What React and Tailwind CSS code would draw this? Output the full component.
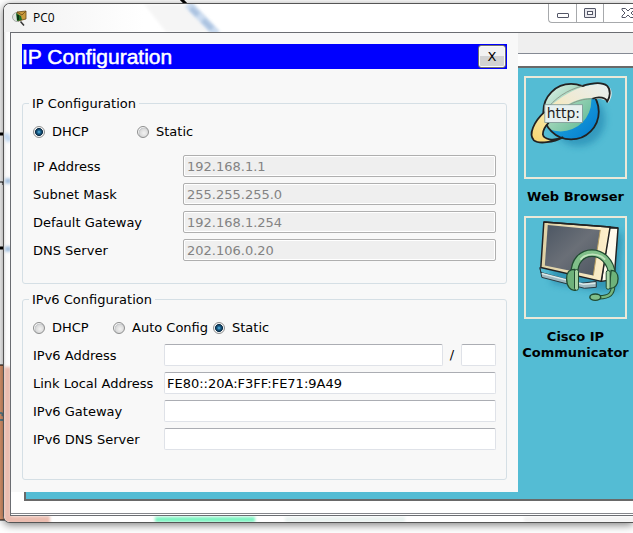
const ipRows = [
  { id: 'ip-address', label: 'IP Address', value: '192.168.1.1' },
  { id: 'subnet-mask', label: 'Subnet Mask', value: '255.255.255.0' },
  { id: 'default-gateway', label: 'Default Gateway', value: '192.168.1.254' },
  { id: 'dns-server', label: 'DNS Server', value: '202.106.0.20' },
];

const ipv6Rows = [
  { id: 'link-local', label: 'Link Local Address', value: 'FE80::20A:F3FF:FE71:9A49' },
  { id: 'ipv6-gateway', label: 'IPv6 Gateway', value: '' },
  { id: 'ipv6-dns', label: 'IPv6 DNS Server', value: '' },
];

const inputClass =
  'h-[22px] min-w-0 rounded-[2px] border border-[#dfe2e8] border-t-[#abadb3] bg-white px-[2px] text-[13px] text-black outline-none';
const disabledClass =
  'h-[22px] min-w-0 flex-1 rounded-[2px] border border-[#afafaf] bg-[#efefef] px-[3px] text-[13px] text-[#838383] shadow-[inset_0_0_0_1px_#fff] outline-none';

function Radio({ name, label, checked, className }) {
  return (
    <label className={`flex items-center gap-[7px] whitespace-nowrap ${className || ''}`}>
      <input
        type="radio"
        name={name}
        defaultChecked={checked}
        className="size-3 shrink-0 appearance-none rounded-full border border-[#8e8f8f] bg-[radial-gradient(circle_at_60%_60%,#f2f2f2_0%,#dcdcdc_45%,#c4c7ca_60%,#f4f4f4_66%)] checked:bg-[radial-gradient(circle_at_50%_50%,#5fc0ea_0%,#1a5f8c_25%,#0b2b44_52%,#f4f4f4_60%)]"
      />
      {label}
    </label>
  );
}

function Group({ title, children, className }) {
  return (
    <fieldset className={`min-w-0 rounded-[3px] border border-[#d5dfe5] px-[10px] ${className}`}>
      <legend className="-ml-1 px-[3px] leading-[19px]">{title}</legend>
      {children}
    </fieldset>
  );
}

// Network drawing that lies behind the window
function Backdrop() {
  return (
    <svg className="absolute inset-0 size-full" aria-hidden="true">
      <rect x="-2" y="365" width="20" height="155" fill="#e39a70" stroke="#000" />
      <path d="M178-4 L188 6" stroke="#000" strokeWidth="3" />
      <path d="M0 134h3M0 248h3" stroke="#000" strokeWidth="3" />
      <path d="M0 182h3v3" stroke="#000" fill="none" />
      <path d="M0 413q4 0 2 3M0 420h3" stroke="#5b8290" strokeWidth="2" fill="none" />
    </svg>
  );
}

// Colours that show through the glass frame
function GlassTint() {
  return (
    <svg className="absolute inset-0 size-full" aria-hidden="true">
      <defs>
        <filter id="glass" x="-50%" y="-50%" width="200%" height="200%">
          <feGaussianBlur stdDeviation="1.5" />
        </filter>
        <linearGradient id="side" x1="0" x2="1">
          <stop offset="0" stopColor="#e2e2e2" />
          <stop offset="0.3" stopColor="#fafafa" />
          <stop offset="1" stopColor="#fff" />
        </linearGradient>
        <linearGradient id="bar" x1="0" x2="1">
          <stop offset="0" stopColor="#f1f1f1" />
          <stop offset="1" stopColor="#fff" />
        </linearGradient>
      </defs>
      <rect width="7" height="520" fill="url(#side)" />
      <rect width="140" height="28" fill="url(#bar)" />
      <path d="M162 28L140 0h50l25 28z" fill="#f5f5f5" filter="url(#glass)" />
      <path d="M184 0L213 30" stroke="#cbdcf0" strokeWidth="8" filter="url(#glass)" />
      <path d="M187 4l7 7M199 16l9 9" stroke="#abc2e0" strokeWidth="5" filter="url(#glass)" />
      <path d="M1 130l5 7" stroke="#c3d9f1" strokeWidth="6" filter="url(#glass)" />
      <path d="M1 177h6M1 245h6" stroke="#9dbbdc" strokeWidth="5" filter="url(#glass)" />
      <path d="M0 363h7v149h39v8H0z" fill="#ebbcaf" filter="url(#glass)" />
      <path d="M151 513h100v5H151z" fill="#74f3bd" filter="url(#glass)" />
      <path d="M281 513h120v5H281z" fill="#e9f2f0" filter="url(#glass)" />
      <path d="M520 513h120v5H520z" fill="#f2f2f2" filter="url(#glass)" />
    </svg>
  );
}

function AppIcon() {
  return (
    <svg width="16" height="16" viewBox="0 0 16 16" aria-hidden="true">
      <ellipse cx="5" cy="7" rx="4.5" ry="4.5" fill="#dfe3df" stroke="#a5aaa5" />
      <path d="M5 2l9-1v8l-8 2z" fill="#c99a3c" stroke="#6b4a16" strokeWidth="0.8" />
      <path d="M5 2l5 3 4-4" fill="none" stroke="#6b4a16" strokeWidth="0.8" />
      <path d="M4 3l5 3 1 4-5 1z" fill="#1c6b28" />
      <path d="M6 5v5" stroke="#0c3512" strokeWidth="2" />
      <path d="M8.500 11.500L12 15.500" stroke="#333" strokeWidth="1.500" />
    </svg>
  );
}

function TitleButtons() {
  const button = 'flex h-[18px] shrink-0 items-center justify-center border-[#a7a9ac]';
  return (
    <div className="flex w-[85px] overflow-hidden rounded-bl-[4px] border-b border-l border-[#a7a9ac] bg-white">
      <button type="button" aria-label="Minimize" className={`${button} w-7 border-r`}>
        <svg width="12" height="12" viewBox="0 0 12 12">
          <rect x="0.500" y="6.500" width="11" height="4" rx="0.500" fill="#fff" stroke="#535666" />
        </svg>
      </button>
      <button type="button" aria-label="Maximize" className={`${button} w-[27px] border-r`}>
        <svg width="12" height="10" viewBox="0 0 12 10">
          <rect x="0.500" y="0.500" width="11" height="9" rx="0.500" fill="#e9e9ee" stroke="#535666" />
          <rect x="3.500" y="3.500" width="5" height="3" fill="#fff" stroke="#535666" />
        </svg>
      </button>
      <button type="button" aria-label="Close" className={`${button} w-12`}>
        <svg width="14" height="12" viewBox="0 0 14 12">
          <path d="M1 1.500h3.500L7 4l2.500-2.500H13V3L10 6l3 3v1.500H9.500L7 8l-2.500 2.500H1V9l3-3-3-3z" fill="#fff" stroke="#535666" strokeLinejoin="round" />
        </svg>
      </button>
    </div>
  );
}

function BrowserIcon() {
  return (
    <svg viewBox="0 0 100 100" className="size-full" aria-hidden="true">
      <defs>
        <linearGradient id="sea" x1="0" y1="0" x2="1" y2="1">
          <stop offset="0.3" stopColor="#23a9dc" />
          <stop offset="1" stopColor="#0079cf" />
        </linearGradient>
        <linearGradient id="land" x1="0" y1="0" x2="1" y2="1">
          <stop offset="0.2" stopColor="#eaf5f2" />
          <stop offset="0.6" stopColor="#9bd3b6" />
          <stop offset="1" stopColor="#58b791" />
        </linearGradient>
        <linearGradient id="swoosh" x1="0" y1="1" x2="1" y2="0">
          <stop offset="0" stopColor="#f6d56d" />
          <stop offset="0.35" stopColor="#fae9a9" />
          <stop offset="0.6" stopColor="#f0ead2" />
          <stop offset="1" stopColor="#e7eff1" />
        </linearGradient>
        <clipPath id="globe"><circle cx="45.500" cy="34" r="28" /></clipPath>
        <filter id="soft" x="-30%" y="-30%" width="160%" height="160%">
          <feGaussianBlur stdDeviation="4" />
        </filter>
      </defs>
      <circle cx="53" cy="42" r="27" fill="#1c82ad" opacity="0.6" filter="url(#soft)" />
      <circle cx="45.500" cy="34" r="28" fill="url(#sea)" />
      <circle cx="35" cy="23" r="31" fill="url(#land)" clipPath="url(#globe)" />
      <circle cx="45.500" cy="34" r="28" fill="none" stroke="#222" strokeWidth="1.800" />
      <path d="M19 34C8 44 2 57 8 63c5 4 20 2 29-3-10 4-19 2-20-3-1-6 8-17 20-27 14-9 25-11 34-9 7 0 11 2 12 4 4-5 5-12 1-16-6-5-17-3-27 0-13 4-28 14-38 25z" fill="url(#swoosh)" />
      <path d="M57 8c10-3 20-4 25 0 4 4 3 11 0 16-1-4-8-6-15-3M19 34C8 44 2 57 8 63c5 4 20 2 29-3-10 4-19 2-20-3 0-4 2-8 6-12" fill="none" stroke="#222" strokeWidth="1.800" strokeLinejoin="round" />
      <path d="M19 34C29 20 42 12 57 8M26 41c15-15 28-20 41-20" fill="none" stroke="#858b80" strokeWidth="0.800" />
      <rect x="19" y="27" width="38" height="18" fill="#e6f0ef" stroke="#7b9492" strokeWidth="0.800" />
      <text x="21" y="40" fontSize="14" fill="#222" className="font-['DejaVu_Sans',sans-serif] font-normal">http:</text>
    </svg>
  );
}

function CommunicatorIcon() {
  return (
    <svg viewBox="0 0 100 100" className="size-full" aria-hidden="true">
      <defs>
        <linearGradient id="screen" x1="0" y1="0" x2="1" y2="1">
          <stop offset="0" stopColor="#4c5663" />
          <stop offset="0.5" stopColor="#6a6f77" />
          <stop offset="1" stopColor="#4d5661" />
        </linearGradient>
        <linearGradient id="bezel" x1="0" x2="1">
          <stop offset="0" stopColor="#ddd0a4" />
          <stop offset="1" stopColor="#fff0cc" />
        </linearGradient>
      </defs>
      <path d="M22 12L97 16 93 74 76 74 26 66z" fill="#1f7da0" opacity="0.6" filter="url(#soft)" />
      <path d="M14 50l1 5 40 11 16-2v6l-12 1-43-11z" fill="#9fb9c0" stroke="#26383f" strokeLinejoin="round" />
      <path d="M16 56l42 11 12-1" stroke="#dceaea" strokeWidth="1.500" fill="none" />
      <path d="M84 10l9 0-4 52-13 2z" fill="#fffaec" stroke="#222" strokeWidth="1.500" strokeLinejoin="round" />
      <path d="M18 4l67 5 8 1-17 54-6-1-55-13z" fill="none" />
      <path d="M18 4l67 5-9 55-61-14z" fill="url(#bezel)" stroke="#222" strokeWidth="1.500" strokeLinejoin="round" />
      <path d="M22 7l53 5-7 46-49-10z" fill="url(#screen)" />
      <path d="M75 12l-7 46" stroke="#b59d62" strokeWidth="1" />
      <path d="M18 4l67 5 8 1" fill="none" stroke="#222" strokeWidth="1.500" />
      <path d="M49 58c-2-30 36-30 38 0" fill="none" stroke="#204b31" strokeWidth="8" />
      <path d="M49 58c-2-30 36-30 38 0" fill="none" stroke="#80bf89" strokeWidth="5.500" />
      <path d="M55 42c6-7 18-7 25 0" fill="none" stroke="#c2e3bd" strokeWidth="2" />
      <path d="M88 68c0 9-4 12-14 12" fill="none" stroke="#204b31" strokeWidth="4.500" />
      <path d="M88 68c0 9-4 12-14 12" fill="none" stroke="#75b67e" strokeWidth="2.500" />
      <path d="M41 61c0-6 3-9 8-9l1 21c-5 1-9-4-9-12z" fill="#6eb27a" stroke="#204b31" strokeWidth="1.300" />
      <path d="M93 61c0-5-3-8-7-8l-2 18c6 1 9-4 9-10z" fill="#6eb27a" stroke="#204b31" strokeWidth="1.300" />
      <rect x="49" y="52" width="4" height="21" rx="2" fill="#a8d6a5" stroke="#204b31" />
      <rect x="81" y="53" width="4" height="19" rx="2" fill="#a8d6a5" stroke="#204b31" />
      <ellipse cx="70" cy="80" rx="5.500" ry="3.200" fill="#80bf89" stroke="#204b31" strokeWidth="1.500" />
    </svg>
  );
}

function DesktopApp({ label, icon }) {
  return (
    <button type="button" className="flex flex-col items-center gap-[10px] text-center text-[13px] leading-4 font-bold text-black">
      <span className="size-[103px] border-2 border-[#ece9d8]">{icon}</span>
      <span className="w-[108px]">{label}</span>
    </button>
  );
}

function ConfigDialog() {
  return (
    <section className="z-10 col-start-1 row-start-1 mr-[115px] mb-[21px] bg-[#f8f8f8] px-[11px] pt-[11px] pb-3">
      <header className="mb-[25px] flex h-[25px] items-center justify-between bg-[#0000ff]">
        <h1 className="font-['Liberation_Sans',Arial,sans-serif] text-[21px] leading-6 text-white [-webkit-text-stroke:0.5px_white]">
          IP Configuration
        </h1>
        <button
          type="button"
          className="mr-px flex h-[23px] w-7 items-center justify-center rounded-[3px] border border-[#707070] bg-linear-to-b from-[#f2f2f2] from-50% to-[#d2d2d2] to-50% shadow-[inset_0_0_0_1px_#fafafa]"
        >
          X
        </button>
      </header>

      <Group title="IP Configuration" className="pt-[9px] pb-[22px]">
        <div className="mb-[13px] flex h-5 items-center">
          <Radio name="ipv4" label="DHCP" checked className="w-[104px]" />
          <Radio name="ipv4" label="Static" />
        </div>
        <div className="flex flex-col gap-[6px]">
          {ipRows.map((row) => (
            <div key={row.id} className="flex items-center">
              <label htmlFor={row.id} className="w-[150px] pt-0.5">{row.label}</label>
              <input id={row.id} type="text" disabled defaultValue={row.value} className={disabledClass} />
            </div>
          ))}
        </div>
      </Group>

      <Group title="IPv6 Configuration" className="mt-[6px] pt-[9px] pb-[29px]">
        <div className="mb-[6px] flex h-5 items-center">
          <Radio name="ipv6" label="DHCP" className="w-20" />
          <Radio name="ipv6" label="Auto Config" className="w-[100px]" />
          <Radio name="ipv6" label="Static" checked />
        </div>
        <div className="flex flex-col gap-[6px]">
          <div className="flex items-center">
            <label htmlFor="ipv6-address" className="w-[131px] pt-0.5">IPv6 Address</label>
            <input id="ipv6-address" type="text" className={`${inputClass} flex-1`} />
            <span className="w-[18px] text-center">/</span>
            <input type="text" aria-label="Prefix length" className={`${inputClass} w-[35px]`} />
          </div>
          {ipv6Rows.map((row) => (
            <div key={row.id} className="flex items-center">
              <label htmlFor={row.id} className="w-[131px] pt-0.5 whitespace-nowrap">{row.label}</label>
              <input id={row.id} type="text" defaultValue={row.value} className={`${inputClass} flex-1`} />
            </div>
          ))}
        </div>
      </Group>
    </section>
  );
}

export default function App() {
  return (
    <div className="relative min-h-screen overflow-hidden bg-white pt-[3px] pl-[3px] font-['DejaVu_Sans',Verdana,sans-serif] text-[13px] text-black">
      <Backdrop />
      <main className="relative overflow-hidden rounded-l-[7px] border border-r-0 border-[#555] bg-white pb-[6px] pl-[6px] shadow-[0_2px_8px_rgba(0,0,0,0.5)]">
        <GlassTint />
        <div className="relative flex h-7 items-start justify-between">
          <div className="flex h-7 items-center gap-[5px] pl-[2px] font-['Open_Sans','Noto_Sans',sans-serif] text-[12px]">
            <AppIcon />
            PC0
          </div>
          <TitleButtons />
        </div>

        <div className="relative border-y border-l border-[#6b6d72] bg-white pb-px">
          <div className="grid border-b border-[#85878c]">
            <div className="col-start-1 row-start-1 flex flex-col">
              <div className="h-[21px] border-b border-[#858a94] bg-[#efefef]" />
              <div className="mt-3 mb-3 ml-[13px] flex flex-1 justify-end border-2 border-r-0 border-[#696969] bg-[#54bcd4]">
                <div className="flex w-[115px] flex-col items-center gap-[11px] pt-2">
                  <DesktopApp label="Web Browser" icon={<BrowserIcon />} />
                  <DesktopApp label="Cisco IP Communicator" icon={<CommunicatorIcon />} />
                </div>
              </div>
            </div>
            <ConfigDialog />
          </div>
        </div>
      </main>
    </div>
  );
}
